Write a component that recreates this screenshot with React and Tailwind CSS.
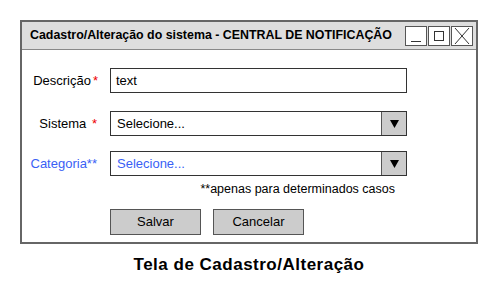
import React from 'react';

const font = { fontFamily: '"Liberation Sans", "DejaVu Sans", sans-serif' };

const Caret = () => (
  <div className="w-[25px] h-full bg-[#cccccc] border-l border-[#555] flex items-center justify-center">
    <svg width="9" height="8" viewBox="0 0 9 8">
      <polygon points="0,0 9,0 4.5,8" fill="#000" />
    </svg>
  </div>
);

const Select = ({ blue }) => (
  <div className="w-[297px] h-[25px] border border-[#333] bg-white flex items-stretch">
    <span className={`flex-1 px-[6px] text-[13px] leading-[23px] ${blue ? 'text-[#3a5ff5]' : 'text-black'}`}>
      Selecione...
    </span>
    <Caret />
  </div>
);

const App = () => {
  return (
    <div className="w-[498px] h-[292px] bg-white pt-[20px] pl-[20px]" style={font}>
      <div className="w-[458px] h-[224px] border-2 border-[#666] flex flex-col">
        {/* barra de titulo */}
        <div className="h-[28px] bg-[#dedede] border-b border-[#888] flex items-center pl-[8px] pr-[3px]">
          <span className="flex-1 min-w-0 text-[12.4px] font-bold text-black whitespace-nowrap">
            Cadastro/Alteração do sistema - CENTRAL DE NOTIFICAÇÃO
          </span>
          <div className="flex h-[20px] shrink-0">
            <div className="w-[22px] h-[20px] bg-white border border-[#555] flex items-end justify-center pb-[3px]">
              <div className="w-[10px] h-px bg-[#333]" />
            </div>
            <div className="w-[22px] h-[20px] bg-white border border-[#555] ml-px flex items-center justify-center">
              <div className="w-[10px] h-[10px] border border-[#333]" />
            </div>
            <div className="w-[22px] h-[20px] bg-white border border-[#555] ml-px flex items-center justify-center">
              <svg width="16" height="16" viewBox="0 0 16 16">
                <path d="M1 0 L15 16 M15 0 L1 16" stroke="#333" strokeWidth="1" />
              </svg>
            </div>
          </div>
        </div>

        {/* formulario */}
        <div className="flex flex-col pl-[88px] pt-[18px]">
          <div className="flex items-center">
            <span className="w-[80px] -ml-[80px] text-right text-[13px] pr-[12px] whitespace-nowrap">
              <span className="text-black">Descrição</span><span className="text-[#e00] pl-[2px]">*</span>
            </span>
            <div className="w-[297px] h-[25px] border border-[#333] bg-white px-[5px] text-[13px] leading-[23px] text-black">
              text
            </div>
          </div>

          <div className="flex items-center mt-[18px]">
            <span className="w-[80px] -ml-[80px] text-right text-[13px] pr-[13px] whitespace-nowrap">
              <span className="text-black">Sistema </span><span className="text-[#e00] pl-[2px]">*</span>
            </span>
            <Select />
          </div>

          <div className="flex items-center mt-[15px]">
            <span className="w-[80px] -ml-[80px] text-right text-[13px] pr-[13px] whitespace-nowrap text-[#3a5ff5]">
              Categoria**
            </span>
            <Select blue />
          </div>

          <div className="w-[297px] text-right pr-[12px] text-[12.5px] text-black mt-[6px] leading-[14px]">
            **apenas para determinados casos
          </div>

          <div className="flex gap-[12px] mt-[13px]">
            <button className="w-[91px] h-[26px] bg-[#cccccc] border border-[#555] text-[13px] text-black">
              Salvar
            </button>
            <button className="w-[91px] h-[26px] bg-[#cccccc] border border-[#555] text-[13px] text-black">
              Cancelar
            </button>
          </div>
        </div>
      </div>

      <div className="w-[458px] text-center mt-[8px] text-[17px] font-bold text-black tracking-[0.5px]">
        Tela de Cadastro/Alteração
      </div>
    </div>
  );
};

export default App;
